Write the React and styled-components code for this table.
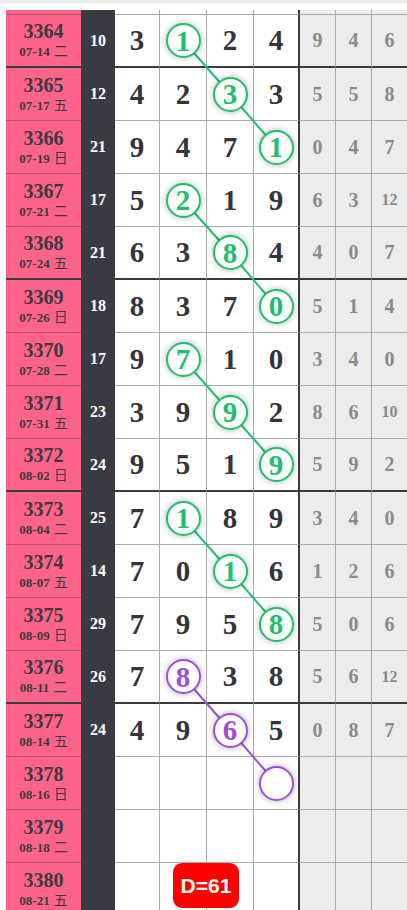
import React from "react";
import styled, { createGlobalStyle } from "styled-components";

const GREEN = "#22bf6a";
const PURPLE = "#9d4fd6";
const COLS = [75, 34, 45, 47, 47, 46, 36, 36, 35];
const ROW_H = 53;
const TOP_STUB = 5;

// [issue, date, week, sum, digits, circled index, tails, colour]
const rows = [
  ["3364", "07-14", "二", "10", [3, 1, 2, 4], 1, [9, 4, 6], "g"],
  ["3365", "07-17", "五", "12", [4, 2, 3, 3], 2, [5, 5, 8], "g"],
  ["3366", "07-19", "日", "21", [9, 4, 7, 1], 3, [0, 4, 7], "g"],
  ["3367", "07-21", "二", "17", [5, 2, 1, 9], 1, [6, 3, 12], "g"],
  ["3368", "07-24", "五", "21", [6, 3, 8, 4], 2, [4, 0, 7], "g"],
  ["3369", "07-26", "日", "18", [8, 3, 7, 0], 3, [5, 1, 4], "g"],
  ["3370", "07-28", "二", "17", [9, 7, 1, 0], 1, [3, 4, 0], "g"],
  ["3371", "07-31", "五", "23", [3, 9, 9, 2], 2, [8, 6, 10], "g"],
  ["3372", "08-02", "日", "24", [9, 5, 1, 9], 3, [5, 9, 2], "g"],
  ["3373", "08-04", "二", "25", [7, 1, 8, 9], 1, [3, 4, 0], "g"],
  ["3374", "08-07", "五", "14", [7, 0, 1, 6], 2, [1, 2, 6], "g"],
  ["3375", "08-09", "日", "29", [7, 9, 5, 8], 3, [5, 0, 6], "g"],
  ["3376", "08-11", "二", "26", [7, 8, 3, 8], 1, [5, 6, 12], "p"],
  ["3377", "08-14", "五", "24", [4, 9, 6, 5], 2, [0, 8, 7], "p"],
  ["3378", "08-16", "日", "", [null, null, null, null], 3, [], "p"],
  ["3379", "08-18", "二", "", [null, null, null, null], -1, [], ""],
  ["3380", "08-21", "五", "", [null, null, null, null], -1, [], ""],
];

const chains = [
  [0, 1, 2, GREEN],
  [3, 4, 5, GREEN],
  [6, 7, 8, GREEN],
  [9, 10, 11, GREEN],
  [12, 13, 14, PURPLE],
];

const Global = createGlobalStyle`
  html, body {
    margin: 0;
    padding: 0;
    background: #fff;
    overflow: hidden;
  }
  body {
    font-family: "Liberation Serif", "Noto Sans CJK SC", serif;
  }
`;

const Page = styled.div`
  width: 407px;
  height: 910px;
  overflow: hidden;
  border-top: 3px solid #eeeeee;
  padding: 7px 0 0 6px;
  box-sizing: border-box;
`;

const Table = styled.div`
  position: relative;
  width: 401px;
`;

const Row = styled.div`
  display: grid;
  grid-template-columns: ${COLS.map((c) => c + "px").join(" ")};
  height: ${(p) => p.$h}px;
  position: relative;
`;

const edge = (p) =>
  p.$thick ? "2px solid #3a3a40" : `1px solid ${p.$line || "#aaaaaa"}`;

const IssueCell = styled.div`
  background: #fe6489;
  border-bottom: ${(p) => edge({ ...p, $line: "#b24f6d" })};
  display: flex;
  flex-direction: column;
  align-items: center;
  justify-content: center;
  color: #3a3a40;
  overflow: hidden;
`;

const Issue = styled.div`
  font-size: 20px;
  font-weight: bold;
  line-height: 21px;
`;

const Day = styled.div`
  font-size: 13px;
  font-weight: bold;
  line-height: 17px;
  display: flex;
  align-items: baseline;
  gap: 4px;
`;

const Week = styled.span`
  font-family: "Noto Sans CJK SC", sans-serif;
  font-weight: normal;
  font-size: 14px;
`;

const SumCell = styled.div`
  background: #3a3a42;
  border-bottom: ${(p) => (p.$thick ? "2px" : "1px")} solid #3a3a42;
  color: #fff;
  font-size: 16px;
  font-weight: bold;
  display: flex;
  align-items: center;
  justify-content: center;
`;

const DigitCell = styled.div`
  background: #fff;
  border-bottom: ${edge};
  border-right: ${(p) => (p.$last ? "2px solid #3a3a40" : "1px solid #aaaaaa")};
  display: flex;
  align-items: center;
  justify-content: center;
  color: #34343a;
  font-size: 29px;
  font-weight: bold;
`;

const TailCell = styled.div`
  background: #ececec;
  border-bottom: ${edge};
  border-right: ${(p) => (p.$last ? "none" : "1px solid #aaaaaa")};
  display: flex;
  align-items: center;
  justify-content: center;
  color: #8a8a8a;
  font-size: ${(p) => (p.$small ? 16 : 20)}px;
  font-weight: bold;
`;

const Ball = styled.div`
  position: relative;
  z-index: 2;
  width: 31px;
  height: 30px;
  border-radius: 50%;
  border: 2px solid ${(p) => p.$color};
  background: #fff;
  box-shadow: 0 0 6px rgba(0, 0, 0, 0.3);
  color: ${(p) => p.$color};
  font-size: 29px;
  font-weight: bold;
  display: flex;
  align-items: center;
  justify-content: center;
  line-height: 1;
  padding-top: 1px;
  box-sizing: content-box;
`;

const Lines = styled.svg`
  position: absolute;
  left: 0;
  top: 0;
  z-index: 1;
  pointer-events: none;
`;

const Badge = styled.div`
  position: absolute;
  z-index: 3;
  left: 167px;
  top: 0;
  width: 66px;
  height: 45px;
  border-radius: 9px;
  background: #ff0000;
  color: #fff;
  font-family: "Liberation Sans", Arial, sans-serif;
  font-weight: bold;
  font-size: 21px;
  display: flex;
  align-items: center;
  justify-content: center;
`;

const colStart = (i) => COLS.slice(0, i).reduce((a, b) => a + b, 0);
const ballX = (k) => {
  const w = COLS[2 + k] - (k === 3 ? 2 : 1);
  return colStart(2 + k) + w / 2;
};
const ballY = (r, thick) => TOP_STUB + r * ROW_H + (ROW_H - (thick ? 2 : 1)) / 2;

const isThick = (r) => r % 4 === 0 && r < 13;

const Stub = () => (
  <Row $h={TOP_STUB}>
    <IssueCell />
    <SumCell />
    <DigitCell />
    <DigitCell />
    <DigitCell />
    <DigitCell $last />
    <TailCell />
    <TailCell />
    <TailCell $last />
  </Row>
);

const DataRow = ({ row, r }) => {
  const [issue, date, week, sum, digits, hit, tails, tone] = row;
  const thick = isThick(r);
  const color = tone === "p" ? PURPLE : GREEN;
  return (
    <Row $h={ROW_H}>
      <IssueCell $thick={thick}>
        <Issue>{issue}</Issue>
        <Day>
          {date}
          <Week>{week}</Week>
        </Day>
      </IssueCell>
      <SumCell $thick={thick}>{sum}</SumCell>
      {digits.map((d, k) => (
        <DigitCell key={k} $thick={thick} $last={k === 3}>
          {k === hit ? <Ball $color={color}>{d}</Ball> : d}
        </DigitCell>
      ))}
      {[0, 1, 2].map((k) => (
        <TailCell
          key={k}
          $thick={thick}
          $last={k === 2}
          $small={tails[k] >= 10}
        >
          {tails[k]}
        </TailCell>
      ))}
      {issue === "3380" && <Badge>D=61</Badge>}
    </Row>
  );
};

export default function App() {
  const height = TOP_STUB + rows.length * ROW_H;
  return (
    <>
      <Global />
      <Page>
        <Table>
          <Stub />
          {rows.map((row, r) => (
            <DataRow key={row[0]} row={row} r={r} />
          ))}
          <Lines width={401} height={height}>
            {chains.map(([a, b, c, col]) =>
              [
                [a, b],
                [b, c],
              ].map(([r1, r2]) => (
                <line
                  key={r1 + "-" + r2}
                  x1={ballX(rows[r1][5])}
                  y1={ballY(r1, isThick(r1))}
                  x2={ballX(rows[r2][5])}
                  y2={ballY(r2, isThick(r2))}
                  stroke={col}
                  strokeWidth="2"
                />
              ))
            )}
          </Lines>
        </Table>
      </Page>
    </>
  );
}
